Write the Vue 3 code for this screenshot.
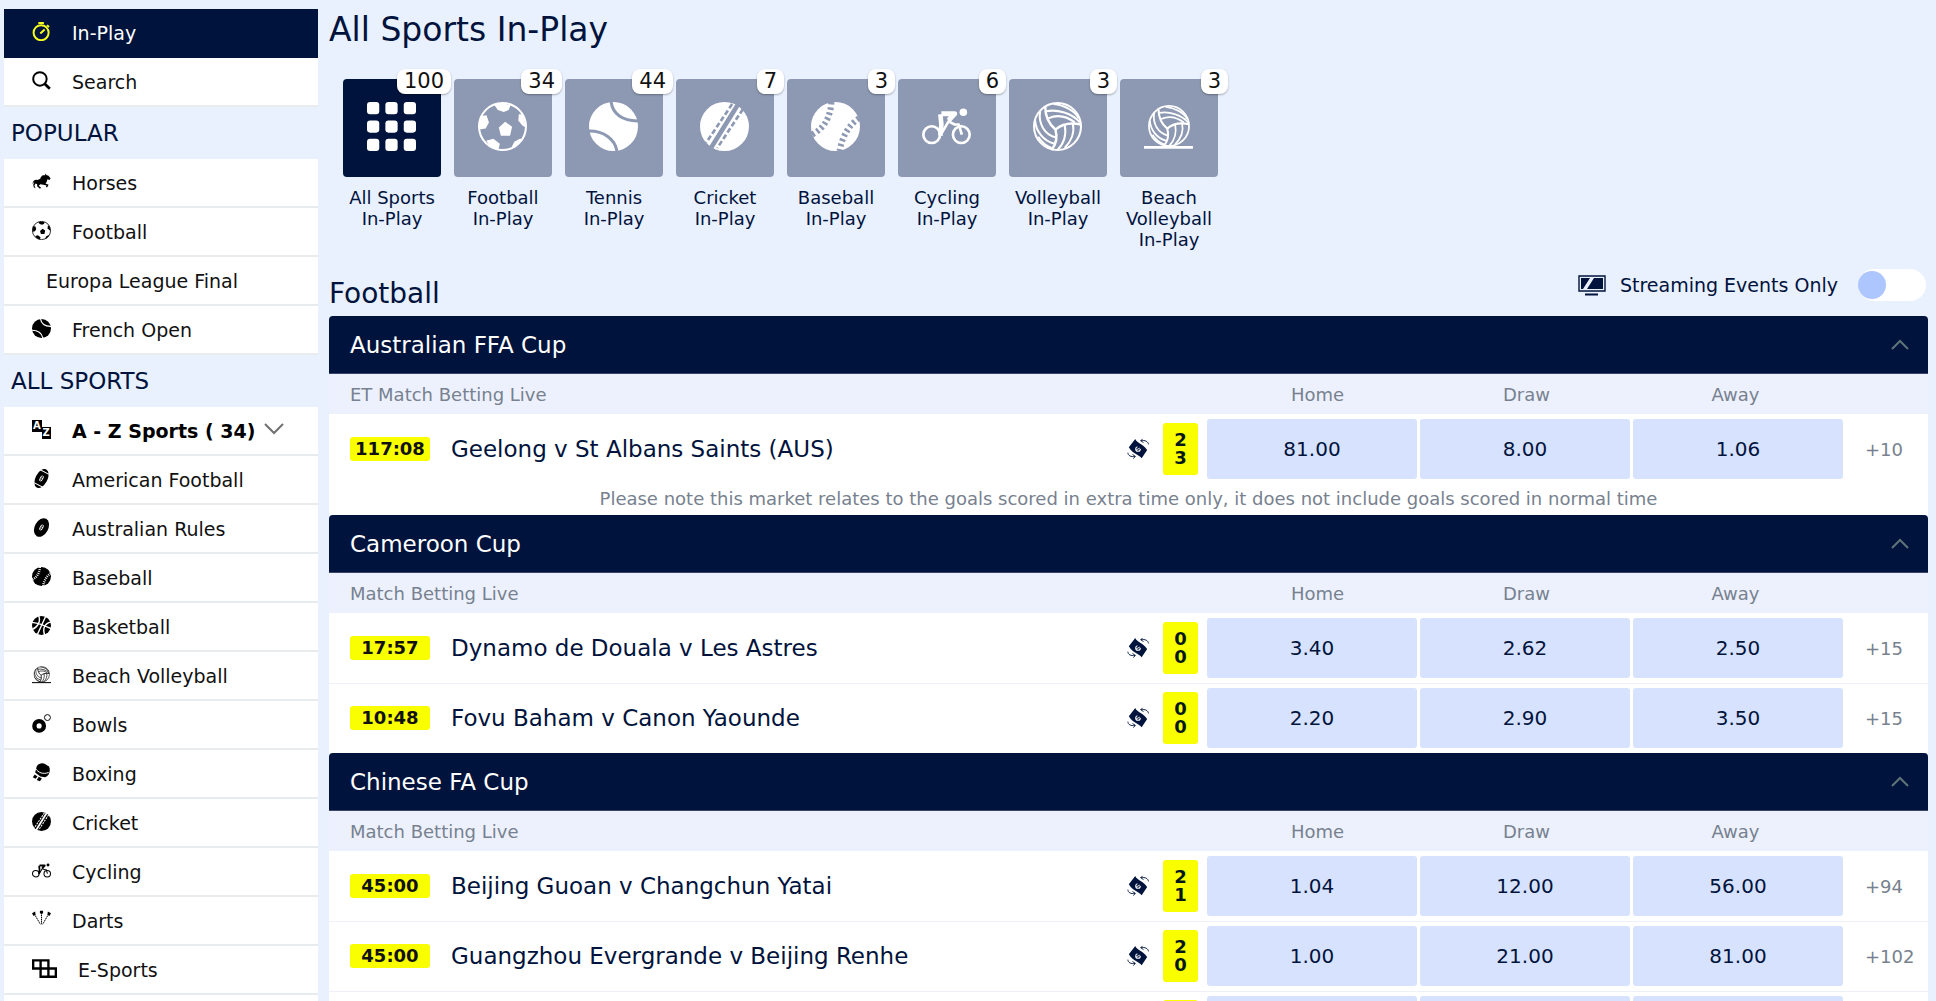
<script setup>
import { ref } from 'vue'

const popular = [
  { label: 'Horses', icon: 'horse' },
  { label: 'Football', icon: 'football' },
  { label: 'Europa League Final' },
  { label: 'French Open', icon: 'tennis' },
]

const allSports = [
  { label: 'American Football', icon: 'gridiron' },
  { label: 'Australian Rules', icon: 'aussie' },
  { label: 'Baseball', icon: 'baseball' },
  { label: 'Basketball', icon: 'basketball' },
  { label: 'Beach Volleyball', icon: 'beach' },
  { label: 'Bowls', icon: 'bowls' },
  { label: 'Boxing', icon: 'boxing' },
  { label: 'Cricket', icon: 'cricket' },
  { label: 'Cycling', icon: 'cycling' },
  { label: 'Darts', icon: 'darts' },
  { label: 'E-Sports', icon: 'esports', wide: true },
  { label: '' },
]

const tiles = [
  { label: 'All Sports', icon: 'grid', count: 100 },
  { label: 'Football', icon: 'football', count: 34 },
  { label: 'Tennis', icon: 'tennis', count: 44 },
  { label: 'Cricket', icon: 'cricket', count: 7 },
  { label: 'Baseball', icon: 'baseball', count: 3 },
  { label: 'Cycling', icon: 'cycling', count: 6 },
  { label: 'Volleyball', icon: 'volleyball', count: 3 },
  { label: 'Beach Volleyball', icon: 'beach', count: 3 },
]

const groups = [
  {
    title: 'Australian FFA Cup',
    market: 'ET Match Betting Live',
    note: 'Please note this market relates to the goals scored in extra time only, it does not include goals scored in normal time',
    events: [
      { time: '117:08', name: 'Geelong v St Albans Saints (AUS)', score: [2, 3], odds: ['81.00', '8.00', '1.06'], more: '+10' },
    ],
  },
  {
    title: 'Cameroon Cup',
    market: 'Match Betting Live',
    events: [
      { time: '17:57', name: 'Dynamo de Douala v Les Astres', score: [0, 0], odds: ['3.40', '2.62', '2.50'], more: '+15' },
      { time: '10:48', name: 'Fovu Baham v Canon Yaounde', score: [0, 0], odds: ['2.20', '2.90', '3.50'], more: '+15' },
    ],
  },
  {
    title: 'Chinese FA Cup',
    market: 'Match Betting Live',
    events: [
      { time: '45:00', name: 'Beijing Guoan v Changchun Yatai', score: [2, 1], odds: ['1.04', '12.00', '56.00'], more: '+94' },
      { time: '45:00', name: 'Guangzhou Evergrande v Beijing Renhe', score: [2, 0], odds: ['1.00', '21.00', '81.00'], more: '+102' },
      { time: '', name: '', score: ['', ''], odds: ['', '', ''], more: '' },
    ],
  },
]

const streamingOnly = ref(false)
const activeTile = ref(0)
</script>

<template>
  <div class="page">
    <svg class="sprite" aria-hidden="true">
      <symbol id="i-grid" viewBox="0 0 48 48">
        <g fill="currentColor">
          <rect v-for="n in 9" :key="n" :x="((n - 1) % 3) * 18" :y="Math.floor((n - 1) / 3) * 18" width="12" height="12" rx="3" />
        </g>
      </symbol>
      <symbol id="i-football" viewBox="0 0 48 48">
        <circle cx="24" cy="24" r="23" fill="none" stroke="currentColor" stroke-width="2" />
        <g fill="currentColor">
          <path d="M20.4 25 26.6 19.4 33.4 24.3 31.4 33 22.4 33Z" />
          <path d="M16 3 23 1 32 3 30 7.8 25.3 9.7 19.4 7.8Z" />
          <path d="M2 14 8.4 13 10.7 20 7.5 26 1 27Z" />
          <path d="M40 12 44 12 47 25 43.4 23 39.5 18Z" />
          <path d="M8 38 15 36 21.4 41 20 46.5 12 43.5Z" />
          <path d="M33 44 35.6 39 41 36 44 36.5 36 45Z" />
        </g>
      </symbol>
      <symbol id="i-tennis" viewBox="0 0 48 48">
        <circle cx="24" cy="24" r="24" fill="currentColor" />
        <path class="cut" d="M21.5-1C23 12 33 19 49 18.5M-1 28.5C14 28 26 36 27.5 49" stroke-width="3" />
      </symbol>
      <symbol id="i-cricket" viewBox="0 0 48 48">
        <circle cx="24" cy="24" r="24" fill="currentColor" />
        <path class="cut" d="M37.5 2 9.5 47" stroke-width="4.5" />
        <path class="cut" d="M31.5 2 6 40M42 7 17 45" stroke-width="2.6" stroke-dasharray="5 2.5" />
      </symbol>
      <symbol id="i-baseball" viewBox="0 0 48 48">
        <circle cx="24" cy="24" r="24" fill="currentColor" />
        <path class="cut" d="M20 0C19 14 14 25 1 32M47 16C38 22 31 32 28 48" stroke-width="6" stroke-dasharray="2.4 2.8" />
      </symbol>
      <symbol id="i-cycling" viewBox="0 0 48 48">
        <g fill="none" stroke="currentColor" stroke-linejoin="round">
          <circle cx="9.5" cy="32" r="8.2" stroke-width="2.6" />
          <circle cx="38.5" cy="32" r="8.2" stroke-width="2.6" />
          <path d="M19 11.5H32L26 18" stroke-width="5" />
          <path d="M18 12 19 22 18 33" stroke-width="4.5" />
          <path d="M19 31 26 19 32 22M31 22H36L39 32" stroke-width="2.6" />
        </g>
        <circle cx="40.5" cy="10" r="3.7" fill="currentColor" />
      </symbol>
      <symbol id="i-volleyball" viewBox="0 0 48 48">
        <g fill="none" stroke="currentColor" stroke-width="2">
          <circle cx="24" cy="24" r="23" />
          <path d="M12 5C12 14 16 22 22 27C29 21 38 20 47 22M22 27C24 34 23 41 18 47" stroke-width="2.4" />
          <path d="M20 2C31 3 41 9 45 16M13 9C24 7 38 11 46 20M15 16C24 12 33 14 41 20" />
          <path d="M7 9C5 21 11 32 23 35M2 18C3 29 10 38 21 41M5 34C9 40 13 43 18 45" />
          <path d="M31 22C33 32 30 41 24 47M39 21C41 30 37 39 31 45" />
        </g>
      </symbol>
      <symbol id="i-beach" viewBox="0 0 48 48">
        <svg x="4" y="3" width="41" height="41" viewBox="0 0 48 48"><use href="#i-volleyball" /></svg>
        <path d="M0 44.5H48" stroke="currentColor" stroke-width="2.6" />
      </symbol>
      <symbol id="i-horse" viewBox="0 0 48 48">
        <path transform="translate(0 3)" fill="currentColor" d="M1 27C2 19 8 15 14 17L21 14 22 10 27 5 33 5 34 1 37 5 41 6 47 13 44 17 39 15 37 22 34 26 42 29 38 36 35 34 37 31 29 29 21 28 17 32 23 37 20 39 13 33 13 28 9 26 6 31 9 38 5 36 3 30 6 21Z" />
      </symbol>
      <symbol id="i-gridiron" viewBox="0 0 48 48">
        <g transform="rotate(28 24 24)">
          <ellipse cx="24" cy="24" rx="15" ry="26" fill="currentColor" />
          <path class="cut" d="M8 6H40M8 42H40" stroke-width="2.5" />
          <ellipse class="hole" cx="24" cy="24" rx="4.5" ry="8" />
          <path d="M24 15V33M20 21H28M20 26H28" stroke="currentColor" stroke-width="1.5" />
        </g>
      </symbol>
      <symbol id="i-aussie" viewBox="0 0 48 48">
        <g transform="rotate(28 24 24)">
          <ellipse cx="24" cy="24" rx="17" ry="25" fill="currentColor" />
          <ellipse class="hole" cx="24" cy="24" rx="4.5" ry="8" />
          <path d="M24 15V33M20 21H28M20 26H28" stroke="currentColor" stroke-width="1.5" />
        </g>
      </symbol>
      <symbol id="i-basketball" viewBox="0 0 48 48">
        <circle cx="24" cy="24" r="24" fill="currentColor" />
        <path class="cut" d="M35 0 13 48M0 16C16 18 32 24 48 32M17 0C22 12 16 28 0 34M48 15C32 18 26 32 32 48" stroke-width="3.6" />
      </symbol>
      <symbol id="i-bowls" viewBox="0 0 48 48">
        <circle cx="18" cy="30" r="12" fill="none" stroke="currentColor" stroke-width="11" />
        <circle cx="39" cy="9" r="7.5" fill="none" stroke="currentColor" stroke-width="2.4" />
      </symbol>
      <symbol id="i-boxing" viewBox="0 0 48 48">
        <path fill="currentColor" d="M12 8C17 0 28-1 34 3L43 9C48 19 43 32 33 36L21 34 8 24Z" />
        <path class="cut" d="M9 14C16 25 28 29 42 24" stroke-width="2.5" />
        <path fill="currentColor" d="M7 29 14 34 9 40 2 36ZM17 35 25 39 20 46 12 43Z" />
      </symbol>
      <symbol id="i-darts" viewBox="0 0 48 48">
        <g stroke="currentColor" stroke-width="2.5" stroke-dasharray="4 1.5">
          <path d="M6 10 21 36M24 6V36M42 10 27 36" />
        </g>
        <path fill="currentColor" d="M0 8 8 4 9 12 4 15ZM20 2H28V9H20ZM48 8 40 4 39 12 44 15Z" />
      </symbol>
      <symbol id="i-esports" viewBox="0 0 64 48">
        <path fill="none" stroke="currentColor" stroke-width="6" d="M3 3H42V24H3ZM22 3V45H61V24H22M42 24V45" />
      </symbol>
      <symbol id="i-watch" viewBox="0 0 48 48">
        <circle cx="23" cy="27" r="19" fill="none" stroke="currentColor" stroke-width="5" />
        <path d="M16 2.5H30M38 8 43 13M21 29 32 19" fill="none" stroke="currentColor" stroke-width="5" />
      </symbol>
      <symbol id="i-search" viewBox="0 0 48 48">
        <circle cx="20" cy="20" r="17" fill="none" stroke="currentColor" stroke-width="5" />
        <path d="M32 32 45 45" stroke="currentColor" stroke-width="7" />
      </symbol>
      <symbol id="i-cash" viewBox="0 0 24 24">
        <path fill="currentColor" d="M9 1C11 6 16 5 22 13L16 22C12 17 7 18 2 10Z" />
        <circle class="cut" cx="12" cy="12" r="2.5" stroke-width="1.2" stroke-dasharray="10 4" />
        <path class="cut" d="M10 13 14 11" stroke-width="1" />
        <path fill="none" stroke="currentColor" stroke-width="1" d="M17 1 15 3 18 5M15 3C20 2 23 4 23.500 7M7 22.500 9 20 6 18M9 20C4 21 1 19 1 16" />
      </symbol>
      <symbol id="i-tv" viewBox="0 0 28 21">
        <path fill="none" stroke="currentColor" stroke-width="1.4" d="M1 1H27V16H1Z" />
        <path fill="currentColor" d="M3 3H12L5 14H3ZM16 3H25V14H9ZM7 18.5H20V20.5H7Z" />
      </symbol>
    </svg>

    <nav class="side" aria-label="Sports">
      <a href="#" class="row current">
        <svg class="ico"><use href="#i-watch" /></svg><span>In-Play</span>
      </a>
      <a href="#" class="row">
        <svg class="ico"><use href="#i-search" /></svg><span>Search</span>
      </a>
      <h2 class="side-title">POPULAR</h2>
      <a v-for="item in popular" :key="item.label" href="#" class="row" :class="{ plain: !item.icon }">
        <svg v-if="item.icon" class="ico"><use :href="'#i-' + item.icon" /></svg><span>{{ item.label }}</span>
      </a>
      <h2 class="side-title">ALL SPORTS</h2>
      <a href="#" class="row strong">
        <span class="ico az" aria-hidden="true"><b>A</b><b>Z</b></span><span>A - Z Sports ( 34)</span>
        <svg class="chev" viewBox="0 0 20 12"><path d="M1 1 10 10 19 1" fill="none" stroke="currentColor" stroke-width="2" /></svg>
      </a>
      <a v-for="item in allSports" :key="item.label" href="#" class="row">
        <svg v-if="item.icon" class="ico" :class="{ wide: item.wide }"><use :href="'#i-' + item.icon" /></svg><span>{{ item.label }}</span>
      </a>
    </nav>

    <main class="main">
      <h1>All Sports In-Play</h1>

      <div class="tiles">
        <button v-for="(tile, i) in tiles" :key="tile.label" type="button" class="tile" @click="activeTile = i">
          <span class="box" :class="{ on: activeTile === i }">
            <svg><use :href="'#i-' + tile.icon" /></svg>
            <span class="count">{{ tile.count }}</span>
          </span>
          <span class="caption">{{ tile.label }} <span class="nowrap">In-Play</span></span>
        </button>
      </div>

      <div class="section-head">
        <h2>Football</h2>
        <label class="stream">
          <svg class="tv"><use href="#i-tv" /></svg>
          <span>Streaming Events Only</span>
          <input v-model="streamingOnly" type="checkbox" class="switch" />
        </label>
      </div>

      <section v-for="group in groups" :key="group.title">
        <button type="button" class="group-head">
          <span>{{ group.title }}</span>
          <svg class="up" viewBox="0 0 18 12"><path d="M1 10 9 2 17 10" fill="none" stroke="currentColor" stroke-width="2" /></svg>
        </button>
        <table>
          <colgroup>
            <col /><col class="c-cash" /><col class="c-score" />
            <col class="c-odd" /><col class="c-odd" /><col class="c-odd" /><col class="c-more" />
          </colgroup>
          <thead>
            <tr>
              <th class="market" colspan="3" scope="col">{{ group.market }}</th>
              <th class="home" scope="col">Home</th>
              <th scope="col">Draw</th>
              <th class="away" scope="col">Away</th>
              <td></td>
            </tr>
          </thead>
          <tbody>
            <tr v-for="(ev, i) in group.events" :key="i">
              <td>
                <div class="event">
                  <span v-if="ev.time" class="time">{{ ev.time }}</span>
                  <a href="#" class="name">{{ ev.name }}</a>
                </div>
              </td>
              <td><svg class="cash"><use href="#i-cash" /></svg></td>
              <td>
                <div class="score"><span v-for="(s, k) in ev.score" :key="k">{{ s }}</span></div>
              </td>
              <td v-for="(odd, k) in ev.odds" :key="k"><button type="button" class="odd">{{ odd }}</button></td>
              <td><a href="#" class="more">{{ ev.more }}</a></td>
            </tr>
            <tr v-if="group.note" class="note">
              <td colspan="7">{{ group.note }}</td>
            </tr>
          </tbody>
        </table>
      </section>
    </main>
  </div>
</template>

<style>
body {
  margin: 0;
  background: #e9f0fe;
}
</style>

<style scoped>
.page {
  --navy: #00133c;
  --cut: #fff;
  display: flex;
  gap: 11px;
  height: 100vh;
  overflow: hidden;
  box-sizing: border-box;
  padding: 0 8px 0 4px;
  background: #e9f0fe;
  color: var(--navy);
  font-family: Verdana, 'DejaVu Sans', sans-serif;
  font-size: 19px;
}
.sprite {
  position: absolute;
  width: 0;
  height: 0;
}
.cut {
  fill: none;
  stroke: var(--cut);
}
.hole {
  fill: var(--cut);
}
h1,
h2 {
  margin: 0;
  font-weight: 400;
}
a {
  color: inherit;
  text-decoration: none;
}
button {
  border: 0;
  padding: 0;
  background: none;
  color: inherit;
  font: inherit;
  cursor: pointer;
}

.side {
  flex: 0 0 314px;
  padding-top: 9px;
}
.row {
  display: flex;
  align-items: center;
  gap: 21px;
  box-sizing: border-box;
  height: 49px;
  padding-top: 1px;
  padding-left: 28px;
  border-bottom: 2px solid #e8ecee;
  background: #fff;
  color: #111;
}
.row.current {
  background: var(--navy);
  border-color: var(--navy);
  color: #fff;
}
.row.current .ico {
  color: #f6ff1e;
}
.row.plain {
  padding-left: 42px;
}
.row.strong {
  font-weight: 700;
  color: #000;
}
.ico {
  flex: none;
  width: 19px;
  height: 19px;
  margin-bottom: 4px;
  color: #000;
}
.ico.wide {
  width: 25px;
}
.az {
  display: flex;
}
.az b {
  width: 10px;
  height: 12px;
  background: #000;
  color: #fff;
  font-size: 10px;
  line-height: 12px;
  text-align: center;
}
.az b:last-child {
  align-self: flex-end;
}
.chev {
  width: 20px;
  height: 12px;
  margin-left: -12px;
  margin-bottom: 4px;
  color: #707070;
}
.side-title {
  padding-left: 7px;
  font-size: 23px;
  line-height: 52px;
}

.main {
  flex: 1;
  min-width: 0;
}
h1 {
  font-size: 33px;
  line-height: 60px;
}
.tiles {
  display: flex;
  align-items: flex-start;
  gap: 13px;
  padding: 19px 14px 0;
}
.tile {
  display: flex;
  flex-direction: column;
  gap: 10px;
  width: 98px;
}
.box {
  --cut: #8d99b2;
  position: relative;
  display: flex;
  align-items: center;
  justify-content: center;
  box-sizing: border-box;
  height: 98px;
  padding: 0 2px 3px 0;
  border-radius: 4px;
  background: #8d99b2;
  color: #fff;
}
.box.on {
  background: var(--navy);
}
.box svg {
  width: 49px;
  height: 49px;
}
.count {
  position: absolute;
  top: -10px;
  right: -10px;
  padding: 0 7px;
  border-radius: 8px;
  background: #fff;
  box-shadow: 0 1px 2px rgba(0, 0, 0, 0.3);
  color: #111;
  font-size: 21px;
  line-height: 25px;
}
.caption {
  font-size: 18px;
  line-height: 21px;
  text-align: center;
}
.nowrap {
  display: block;
}

.section-head {
  display: flex;
  align-items: center;
  justify-content: space-between;
  height: 62px;
  margin-top: 4px;
}
.section-head h2 {
  padding-top: 16px;
  font-size: 28px;
}
.stream {
  display: flex;
  align-items: center;
}
.tv {
  width: 28px;
  height: 21px;
  margin-right: 14px;
}
.switch {
  appearance: none;
  display: flex;
  align-items: center;
  width: 68px;
  height: 32px;
  margin: 0 2px 0 20px;
  border-radius: 16px;
  background: #fff;
}
.switch::before {
  content: '';
  width: 28px;
  height: 28px;
  border-radius: 50%;
  background: #adc6fd;
}
.switch:checked {
  justify-content: flex-end;
}

.group-head {
  display: flex;
  align-items: center;
  justify-content: space-between;
  width: 100%;
  height: 58px;
  padding: 0 19px 0 21px;
  border-bottom: 1px solid #39466a;
  border-radius: 4px 4px 0 0;
  background: var(--navy);
  color: #fff;
  font-size: 23px;
}
.up {
  width: 18px;
  height: 12px;
  color: #5f7478;
}
table {
  width: 100%;
  table-layout: fixed;
  border-collapse: collapse;
  background: #fff;
}
.c-cash {
  width: 36px;
}
.c-score {
  width: 44px;
}
.c-odd {
  width: 213px;
}
.c-more {
  width: 82px;
}
th,
td {
  padding: 0;
}
thead tr {
  height: 40px;
  background: #edf1fd;
}
th {
  color: #77818f;
  font-size: 18px;
  font-weight: 400;
}
.market {
  padding-left: 21px;
  text-align: left;
}
.home {
  padding-left: 8px;
}
.away {
  padding-right: 8px;
}
tbody td {
  box-sizing: border-box;
  height: 70px;
  border-bottom: 1px solid #edf0f8;
}
tbody tr:last-child td {
  border-bottom: 0;
}
tbody .note td,
tbody tr.note:last-child td {
  height: 31px;
  padding-bottom: 2px;
  color: #77818f;
  font-size: 18px;
  text-align: center;
}
tbody tr:has(+ .note) td {
  border-bottom-color: #fff;
}
.event {
  display: flex;
  align-items: center;
  gap: 21px;
  padding-left: 21px;
}
.time {
  flex: none;
  width: 80px;
  border-radius: 3px;
  background: #faff00;
  color: #111;
  font-size: 18px;
  font-weight: 700;
  line-height: 24px;
  text-align: center;
}
.name {
  font-size: 23px;
  white-space: nowrap;
}
.cash {
  display: block;
  width: 22px;
  height: 22px;
}
.score {
  display: flex;
  flex-direction: column;
  align-items: center;
  justify-content: center;
  width: 35px;
  height: 52px;
  border-radius: 3px;
  background: #faff00;
  color: #04181c;
  font-size: 18px;
  font-weight: 700;
  line-height: 18px;
}
.odd {
  display: block;
  width: 210px;
  height: 60px;
  border-radius: 3px;
  background: #d7e2fe;
  font-size: 20px;
}
.more {
  padding-left: 19px;
  color: #77818f;
  font-size: 18px;
}
</style>
